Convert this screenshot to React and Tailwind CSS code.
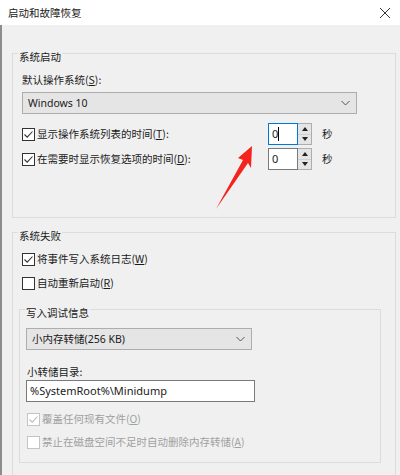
import React from "react";

const font = { fontFamily: '"Noto Sans CJK SC", "Noto Sans", sans-serif' };
const latin = { fontFamily: '"Noto Sans", "Noto Sans CJK SC", sans-serif' };

function Check({ checked, disabled, label }) {
  const color = disabled ? "#bcbcbc" : "#333333";
  return (
    <div className="flex items-center h-[16px]">
      <span
        className={
          "w-[13px] h-[13px] border bg-white flex items-center justify-center shrink-0 " +
          (disabled ? "border-[#c4c4c4]" : "border-[#333333]")
        }
      >
        {checked && (
          <svg width="11" height="11" viewBox="0 0 11 11">
            <path d="M1.5 5.5 L4.2 8.2 L9.5 2.5" fill="none" stroke={color} strokeWidth="1.1" />
          </svg>
        )}
      </span>
      <span className={"ml-[2px] whitespace-nowrap " + (disabled ? "text-[#a0a0a0]" : "text-[#1a1a1a]")}>
        {label}
      </span>
    </div>
  );
}

function Select({ text, w }) {
  return (
    <div
      className={"h-[22px] bg-[#e5e5e5] border border-[#adadad] flex items-center justify-between pl-[5px] pr-[6px] " + w}
    >
      <span className="text-[#1a1a1a]" style={latin}>{text}</span>
      <svg width="9" height="6" viewBox="0 0 9 6">
        <path d="M0.5 1 L4.5 5 L8.5 1" fill="none" stroke="#555" strokeWidth="1" />
      </svg>
    </div>
  );
}

function Spin({ focused }) {
  return (
    <div className="flex items-center">
      <div
        className={
          "w-[30px] h-[22px] bg-white border flex items-center pl-[3px] " +
          (focused ? "border-[#0078d7]" : "border-[#7a7a7a]")
        }
      >
        <span className="text-[#1a1a1a] text-[11px]" style={latin}>0</span>
        {focused && <span className="w-px h-[14px] bg-black" />}
      </div>
      <div className="w-[14px] h-[22px] flex flex-col border-y border-r border-[#adadad] bg-[#f0f0f0]">
        <div className="flex-1 flex items-center justify-center border-b border-[#d0d0d0] bg-[#e5e5e5]">
          <svg width="6" height="4" viewBox="0 0 6 4">
            <path d="M0 4 L3 0 L6 4 Z" fill="#222" />
          </svg>
        </div>
        <div className="flex-1 flex items-center justify-center bg-[#e5e5e5]">
          <svg width="6" height="4" viewBox="0 0 6 4">
            <path d="M0 0 L3 4 L6 0 Z" fill="#222" />
          </svg>
        </div>
      </div>
      <span className="ml-[10px] text-[#1a1a1a]">秒</span>
    </div>
  );
}

function Group({ title, className, children }) {
  return (
    <div className={"relative border border-[#dcdcdc] " + className}>
      <span className="absolute -top-[5px] left-[5px] px-[1px] bg-[#f0f0f0] leading-[16px] text-[#1a1a1a]">
        {title}
      </span>
      {children}
    </div>
  );
}

export default function App() {
  return (
    <div className="w-[400px] h-[475px] overflow-hidden bg-[#f0f0f0] relative text-[10.5px] leading-[16px]" style={font}>
      <div className="h-[25px] bg-white flex items-center justify-between pl-[8px] pr-[9px]">
        <span className="text-[#1a1a1a]">启动和故障恢复</span>
        <svg width="12" height="12" viewBox="0 0 12 12">
          <path d="M1 1 L11 11 M11 1 L1 11" stroke="#333" strokeWidth="1" />
        </svg>
      </div>
      <div className="h-[450px] border-l-2 border-[#8c8c8c] pl-[10px] pt-[28px]">
        <Group title="系统启动" className="w-[384px] h-[165px] pl-[9px] pt-[18px]">
          <div className="text-[#1a1a1a]">
            默认操作系统(<span className="underline">S</span>):
          </div>
          <div className="mt-[4px]">
            <Select text="Windows 10" w="w-[335px]" />
          </div>
          <div className="mt-[9px] flex items-center">
            <div className="w-[246px]">
              <Check checked label={<>显示操作系统列表的时间(<span className="underline">T</span>):</>} />
            </div>
            <Spin focused />
          </div>
          <div className="mt-[3px] flex items-center">
            <div className="w-[246px]">
              <Check checked label={<>在需要时显示恢复选项的时间(<span className="underline">D</span>):</>} />
            </div>
            <Spin />
          </div>
        </Group>

        <Group title="系统失败" className="mt-[14px] w-[384px] h-[300px] pl-[9px] pt-[18px]">
          <Check checked label={<>将事件写入系统日志(<span className="underline">W</span>)</>} />
          <div className="mt-[8px]">
            <Check label={<>自动重新启动(<span className="underline">R</span>)</>} />
          </div>
          <Group title="写入调试信息" className="mt-[18px] -ml-[3px] w-[362px] h-[154px] pl-[6px] pt-[18px]">
            <Select text="小内存转储(256 KB)" w="w-[226px]" />
            <div className="mt-[14px] pl-[1px] text-[#1a1a1a]">小转储目录:</div>
            <div className="w-[229px] h-[22px] bg-white border border-[#7a7a7a] flex items-center pl-[3px]">
              <span className="text-[#1a1a1a] text-[11px]" style={latin}>
                %SystemRoot%\Minidump
              </span>
            </div>
            <div className="mt-[9px] pl-[1px]">
              <Check checked disabled label={<>覆盖任何现有文件(<span className="underline">O</span>)</>} />
            </div>
            <div className="mt-[7px] pl-[1px]">
              <Check disabled label={<>禁止在磁盘空间不足时自动删除内存转储(<span className="underline">A</span>)</>} />
            </div>
          </Group>
        </Group>
      </div>

      <svg className="absolute left-0 top-0 pointer-events-none" width="400" height="475" viewBox="0 0 400 475">
        <polygon
          points="252,146 238,158 243,160 216,209 248,163 251,168"
          fill="#f4241c"
        />
      </svg>
    </div>
  );
}
